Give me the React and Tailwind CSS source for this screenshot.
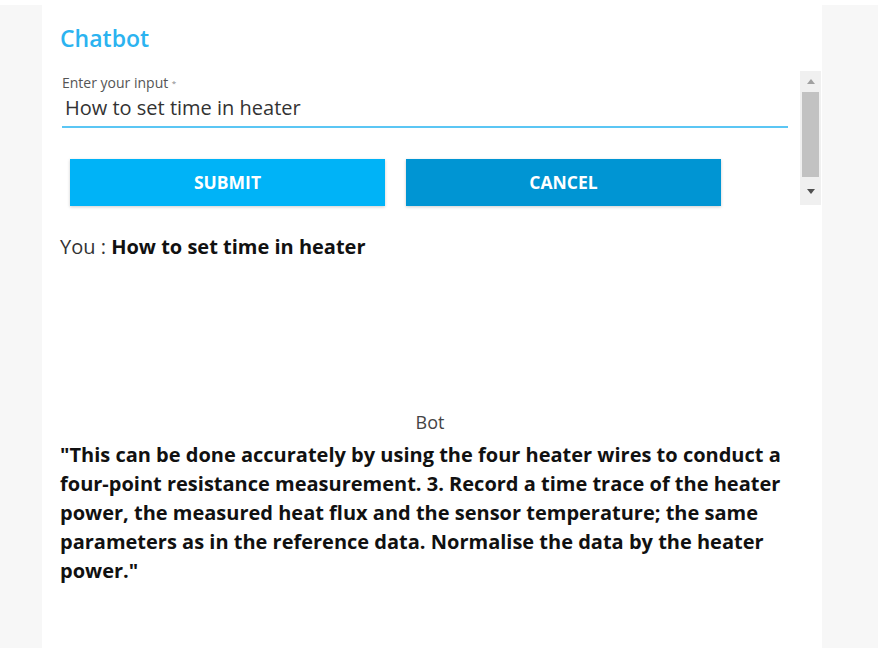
export default function App() {
  return (
    <div className="min-h-screen w-full bg-[#f7f7f7] font-['Open_Sans',sans-serif]">
      <div className="ml-[42px] w-[780px] h-[643px] mt-[5px] bg-white pl-[18px] pt-[18px]">
        <h1 className="text-[23px] leading-[30px] font-semibold text-[#2bb3f0]">Chatbot</h1>

        <div className="flex mt-[18px]">
          <div className="w-[728px]">
            <div className="pl-[2px] pt-[4px]">
              <label className="block text-[14px] leading-[16px] text-[#555]">
                Enter your input <span className="text-[8px] align-top text-[#888]">*</span>
              </label>
              <div className="border-b-2 border-[#5bc6f4] pt-[4px] pb-[5px] pl-[3px]">
                <span className="text-[20px] leading-[26px] text-[#333]">How to set time in heater</span>
              </div>
            </div>

            <div className="flex gap-[21px] pl-[10px] mt-[31px]">
              <button className="w-[315px] h-[47px] bg-[#00b3f7] text-white text-[17.5px] font-bold shadow-[0_1px_3px_rgba(0,0,0,0.2)]">
                SUBMIT
              </button>
              <button className="w-[315px] h-[47px] bg-[#0095d3] text-white text-[17.5px] font-bold shadow-[0_1px_3px_rgba(0,0,0,0.2)]">
                CANCEL
              </button>
            </div>
          </div>
          <Scrollbar />
        </div>

        <p className="mt-[29px] text-[20px] leading-[24px] text-[#333]">
          You : <span className="font-bold text-[#111]">How to set time in heater</span>
        </p>

        <p className="mt-[152px] text-center w-[740px] text-[18px] leading-[22px] text-[#444]">Bot</p>

        <p className="mt-[7px] w-[728px] text-[20px] leading-[29px] font-bold text-[#111]">
          "This can be done accurately by using the four heater wires to conduct a four-point resistance measurement. 3. Record a time trace of the heater power, the measured heat flux and the sensor temperature; the same parameters as in the reference data. Normalise the data by the heater power."
        </p>
      </div>
    </div>
  );
}

function Scrollbar() {
  return (
    <div className="ml-[12px] w-[21px] h-[134px] bg-[#f0f0f0] flex flex-col items-center">
      <div className="h-[21px] flex items-center justify-center">
        <svg width="8" height="5" viewBox="0 0 8 5"><path d="M4 0L8 5H0Z" fill="#a0a0a0" /></svg>
      </div>
      <div className="w-[17px] h-[85px] bg-[#c2c2c2]" />
      <div className="flex-1 flex items-center justify-center">
        <svg width="8" height="5" viewBox="0 0 8 5"><path d="M0 0H8L4 5Z" fill="#505050" /></svg>
      </div>
    </div>
  );
}
